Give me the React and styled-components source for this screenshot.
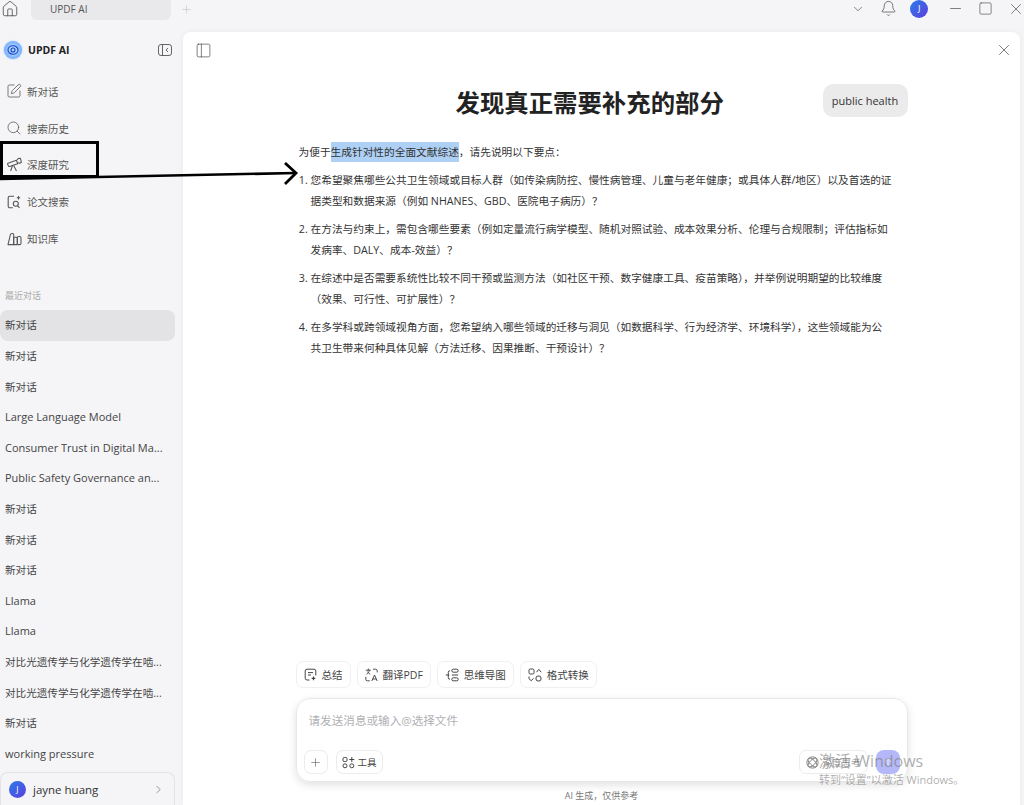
import React from "react"
import styled, { createGlobalStyle } from "styled-components"
import { Home, Plus, ChevronDown, ChevronRight, Bell, Minus, Square, X, SquarePen, Search, PanelLeft, ArrowUp } from "lucide-react"

const FONT = `"Open Sans", "Noto Sans CJK SC", sans-serif`

const GlobalStyle = createGlobalStyle`
  html, body {
    margin: 0;
    padding: 0;
    width: 1024px;
    height: 805px;
    overflow: hidden;
    background: #f5f5f7;
    font-family: ${FONT};
  }
  * { box-sizing: border-box; }
`

function TelescopeIcon() {
  return (
    <svg width="15" height="15" viewBox="0 0 15 15" fill="none" stroke="#555" strokeWidth="1.05" strokeLinejoin="round">
      <path d="M1 6.2L9.4 3.2l1.3 3.6-8.2 2.7a.8.8 0 0 1-1-.5L.6 7.2a.8.8 0 0 1 .4-1z" />
      <path d="M10 3l1.2-1.4 2.2-.3 1 4-1.6 1-2-.6" />
      <path d="M5.5 8.5L3.6 14M6.5 8.2L9.5 14" />
    </svg>
  )
}

function PaperSearchIcon() {
  return (
    <svg width="14" height="14" viewBox="0 0 14 14" fill="none" stroke="#555" strokeWidth="1.1">
      <path d="M7 1.2H2.8A1.6 1.6 0 0 0 1.2 2.8v8.4a1.6 1.6 0 0 0 1.6 1.6h3" />
      <circle cx="8.8" cy="8.8" r="2.5" />
      <path d="M10.6 10.8l1.9 2M11.5 1v3.4M9.8 2.7h3.4" />
    </svg>
  )
}

function KnowledgeIcon() {
  return (
    <svg width="15" height="14" viewBox="0 0 15 14" fill="none" stroke="#555" strokeWidth="1.05" strokeLinejoin="round">
      <path d="M1 12.6L3.4 2.6c.2-.8.8-1.2 1.5-1.2h.8c.6 0 1 .4 1 1v10.2z" />
      <path d="M6.7 12.6V5.2h2.6c.6 0 1 .4 1 1v6.4z" />
      <rect x="10.3" y="4.4" width="3.7" height="8.2" rx="1.4" />
    </svg>
  )
}

const navItems = [
  { label: "新对话", icon: <SquarePen size={16} strokeWidth={1.15} /> },
  { label: "搜索历史", icon: <Search size={16} strokeWidth={1.15} /> },
  { label: "深度研究", icon: <TelescopeIcon /> },
  { label: "论文搜索", icon: <PaperSearchIcon /> },
  { label: "知识库", icon: <KnowledgeIcon /> },
]

const chats = [
  "新对话",
  "新对话",
  "Large Language Model",
  "Consumer Trust in Digital Ma...",
  "Public Safety Governance an...",
  "新对话",
  "新对话",
  "新对话",
  "Llama",
  "Llama",
  "对比光遗传学与化学遗传学在啮...",
  "对比光遗传学与化学遗传学在啮...",
  "新对话",
  "working pressure",
]

const isCjk = (text) => /[\u4e00-\u9fff]/.test(text)

const questions = [
  "您希望聚焦哪些公共卫生领域或目标人群\uFF08如传染病防控、慢性病管理、儿童与老年健康\uFF1B或具体人群/地区\uFF09以及首选的证据类型和数据来源\uFF08例如 NHANES、GBD、医院电子病历\uFF09\uFF1F",
  "在方法与约束上\uFF0C需包含哪些要素\uFF08例如定量流行病学模型、随机对照试验、成本效果分析、伦理与合规限制\uFF1B评估指标如发病率、DALY、成本-效益\uFF09\uFF1F",
  "在综述中是否需要系统性比较不同干预或监测方法\uFF08如社区干预、数字健康工具、疫苗策略\uFF09\uFF0C并举例说明期望的比较维度\uFF08效果、可行性、可扩展性\uFF09\uFF1F",
  "在多学科或跨领域视角方面\uFF0C您希望纳入哪些领域的迁移与洞见\uFF08如数据科学、行为经济学、环境科学\uFF09\uFF0C这些领域能为公共卫生带来何种具体见解\uFF08方法迁移、因果推断、干预设计\uFF09\uFF1F",
]

function SummaryIcon() {
  return (
    <svg width="13" height="13" viewBox="0 0 13 13" fill="none" stroke="#444" strokeWidth="1">
      <path d="M5.5 12H3A1.8 1.8 0 0 1 1.2 10.2V3A1.8 1.8 0 0 1 3 1.2h7A1.8 1.8 0 0 1 11.8 3v4.5" />
      <path d="M4 4.6h5M4 7h3" />
      <path d="M9.5 8.6v3.6M7.7 10.4h3.6" strokeWidth="1.2" />
    </svg>
  )
}

function TranslateIcon() {
  return (
    <svg width="13" height="14" viewBox="0 0 13 14" fill="none" stroke="#444" strokeWidth="0.95">
      <path d="M.8 2.2h5M3.3.6v1.6M1.6 6.2c1.6-.8 2.4-2 2.7-4M5.2 6.2c-1.4-.6-2.2-1.4-2.6-2.6" />
      <path d="M8 1.2h2.6a1.6 1.6 0 0 1 1.6 1.6v1.6" />
      <path d="M4.8 12.8H2.4A1.6 1.6 0 0 1 .8 11.2V8.8" />
      <path d="M6.8 13l2.7-6 2.7 6M7.8 11h3.4" />
    </svg>
  )
}

function MindmapIcon() {
  return (
    <svg width="14" height="14" viewBox="0 0 14 14" fill="none" stroke="#444" strokeWidth="1">
      <rect x="6.8" y="1.2" width="6.4" height="3" rx="1.5" />
      <rect x="6.8" y="9.8" width="6.4" height="3" rx="1.5" />
      <path d="M6.8 7h6.4M.8 7h3.4M5 2.7A1.7 1.7 0 0 0 3.3 4.4v5.2A1.7 1.7 0 0 0 5 11.3" />
    </svg>
  )
}

function ConvertIcon() {
  return (
    <svg width="14" height="14" viewBox="0 0 14 14" fill="none" stroke="#444" strokeWidth="1">
      <rect x="1" y="1" width="5" height="5" rx="1.3" />
      <rect x="8" y="8" width="5" height="5" rx="2" />
      <path d="M8.5 4.2l2.3-2.8 2.4 2.8M1 8.5v2.2l2.2 2 2.4-2.4" />
    </svg>
  )
}

function ToolsIcon() {
  return (
    <svg width="13" height="13" viewBox="0 0 13 13" fill="none" stroke="#444" strokeWidth="1">
      <rect x="1" y="1.5" width="4" height="4" rx="1.2" />
      <circle cx="3" cy="9.8" r="2" />
      <circle cx="9.8" cy="9.8" r="2" />
      <path d="M9.8 1v5M7.3 3.5h5" />
    </svg>
  )
}

function ModelIcon() {
  return (
    <svg width="13" height="13" viewBox="0 0 13 13" fill="none" stroke="#777" strokeWidth="0.9">
      <ellipse cx="6.5" cy="6.5" rx="5.8" ry="2.6" transform="rotate(45 6.5 6.5)" />
      <ellipse cx="6.5" cy="6.5" rx="5.8" ry="2.6" transform="rotate(-45 6.5 6.5)" />
      <circle cx="6.5" cy="6.5" r="5.6" />
    </svg>
  )
}

function Logo() {
  return (
    <LogoMark>
      <svg width="14" height="14" viewBox="0 0 14 14" fill="none" stroke="#1b3fc4" strokeWidth="1.1">
        <ellipse cx="7" cy="7" rx="5" ry="4.2" />
        <circle cx="7" cy="7" r="2" />
      </svg>
    </LogoMark>
  )
}

const App = () => {
  return (
    <Page>
      <GlobalStyle />
      <TitleBar>
        <HomeButton>
          <Home size={18} strokeWidth={1.05} />
        </HomeButton>
        <Tab>UPDF AI</Tab>
        <NewTab>
          <Plus size={13} strokeWidth={1.2} />
        </NewTab>
        <AccountControls>
          <ControlSlot>
            <ChevronDown size={14} strokeWidth={1.1} />
          </ControlSlot>
          <ControlSlot>
            <Bell size={17} strokeWidth={1} />
          </ControlSlot>
          <ControlSlot>
            <Avatar $size={18}>J</Avatar>
          </ControlSlot>
        </AccountControls>
        <WindowControls>
          <ControlSlot>
            <Minus size={17} strokeWidth={0.95} />
          </ControlSlot>
          <ControlSlot>
            <Square size={15} strokeWidth={1} />
          </ControlSlot>
          <ControlSlot>
            <X size={18} strokeWidth={0.9} />
          </ControlSlot>
        </WindowControls>
      </TitleBar>

      <Body>
        <Sidebar>
          <Brand>
            <Logo />
            <BrandName>UPDF AI</BrandName>
            <CollapseButton>
              <svg width="14" height="12" viewBox="0 0 14 12" fill="none" stroke="#555" strokeWidth="0.9">
                <rect x="0.5" y="0.5" width="13" height="11" rx="2.5" />
                <path d="M4.5 0.5v11M10 4L8 6l2 2" />
              </svg>
            </CollapseButton>
          </Brand>

          <Nav>
            {navItems.map((item) => (
              <NavItem key={item.label}>
                <NavIcon>{item.icon}</NavIcon>
                <span>{item.label}</span>
              </NavItem>
            ))}
          </Nav>

          <RecentLabel>最近对话</RecentLabel>

          <ChatList>
            <ChatRow $active $cjk>
              新对话
            </ChatRow>
            {chats.map((title, i) => (
              <ChatRow key={i} $cjk={isCjk(title)}>
                {title}
              </ChatRow>
            ))}
          </ChatList>

          <UserRow>
            <Avatar $size={17}>J</Avatar>
            <UserName>jayne huang</UserName>
            <ChevronRight size={13} strokeWidth={1.1} />
          </UserRow>
        </Sidebar>

        <Panel>
          <PanelHeader>
            <PanelLeft size={17} strokeWidth={0.95} />
            <X size={18} strokeWidth={0.95} />
          </PanelHeader>

          <Column>
            <TitleRow>
              <Title>发现真正需要补充的部分</Title>
              <Tag>public health</Tag>
            </TitleRow>

            <Answer>
              <Intro>
                为便于<Selected>生成针对性的全面文献综述</Selected>
                {"\uFF0C请先说明以下要点\uFF1A"}
              </Intro>
              <Questions>
                {questions.map((q) => (
                  <li key={q}>{q}</li>
                ))}
              </Questions>
            </Answer>

            <QuickActions>
              <QuickButton>
                <SummaryIcon />
                总结
              </QuickButton>
              <QuickButton>
                <TranslateIcon />
                翻译PDF
              </QuickButton>
              <QuickButton>
                <MindmapIcon />
                思维导图
              </QuickButton>
              <QuickButton>
                <ConvertIcon />
                格式转换
              </QuickButton>
            </QuickActions>

            <Composer>
              <Placeholder>请发送消息或输入@选择文件</Placeholder>
              <ComposerBar>
                <PlusButton>
                  <Plus size={13} strokeWidth={1.1} />
                </PlusButton>
                <ToolButton>
                  <ToolsIcon />
                  工具
                </ToolButton>
                <ModelButton>
                  <ModelIcon />
                  深度思考
                </ModelButton>
                <SendButton>
                  <ArrowUp size={12} strokeWidth={1.6} />
                </SendButton>
              </ComposerBar>
            </Composer>

            <Disclaimer>{"AI 生成\uFF0C仅供参考"}</Disclaimer>
          </Column>
        </Panel>
      </Body>

      <Callout />
      <Arrow width="300" height="30" viewBox="0 0 300 30" fill="none" stroke="#000">
        <path d="M0 17L296 11" strokeWidth="2.6" />
        <path d="M285 1L296 11L285 22" strokeWidth="2.8" />
      </Arrow>

      <Watermark>
        <strong>激活 Windows</strong>
        <span>转到“设置”以激活 Windows。</span>
      </Watermark>
    </Page>
  )
}
export default App

const Page = styled.div`
  position: relative;
  width: 1024px;
  height: 805px;
  overflow: hidden;
  display: flex;
  flex-direction: column;
  background: #f5f5f7;
  color: #333;
`

const TitleBar = styled.header`
  height: 32px;
  flex: none;
  display: flex;
  align-items: flex-start;
  color: #444;
`

const HomeButton = styled.div`
  width: 31px;
  height: 18px;
  padding-left: 1px;
  display: flex;
  align-items: center;
`

const Tab = styled.div`
  width: 140px;
  height: 20px;
  padding-left: 19px;
  background: #e9e9eb;
  border-radius: 0 0 6px 6px;
  font-size: 10px;
  line-height: 18px;
  color: #555;
`

const NewTab = styled.div`
  height: 18px;
  margin-left: 9px;
  display: flex;
  align-items: center;
  color: #c4c4c8;
`

const AccountControls = styled.div`
  margin-left: auto;
  display: flex;
`

const WindowControls = styled.div`
  margin: 0 -7.5px 0 5.5px;
  display: flex;
`

const ControlSlot = styled.div`
  width: 30.5px;
  height: 17px;
  display: flex;
  align-items: center;
  justify-content: center;
  color: #444;
`

const Avatar = styled.div`
  width: ${(p) => p.$size}px;
  height: ${(p) => p.$size}px;
  flex: none;
  border-radius: 50%;
  background: linear-gradient(135deg, #2b7be8, #5b3fe0);
  color: #fff;
  font-size: ${(p) => p.$size / 2}px;
  display: flex;
  align-items: center;
  justify-content: center;
`

const Body = styled.div`
  flex: 1;
  min-height: 0;
  display: flex;
`

const Sidebar = styled.aside`
  width: 183px;
  flex: none;
  display: flex;
  flex-direction: column;
`

const Brand = styled.div`
  height: 36px;
  padding: 0 11px 0 4px;
  display: flex;
  align-items: center;
  gap: 6px;
`

const LogoMark = styled.div`
  width: 18px;
  height: 18px;
  border-radius: 50%;
  background: radial-gradient(circle, #a8d4ff 30%, #4f8df5);
  box-shadow: 0 0 2px #8db8fa;
  display: flex;
  align-items: center;
  justify-content: center;
`

const BrandName = styled.div`
  font-size: 10.5px;
  font-weight: 700;
  color: #222;
`

const CollapseButton = styled.div`
  margin-left: auto;
  display: flex;
`

const Nav = styled.nav`
  margin-top: 5px;
  display: flex;
  flex-direction: column;
`

const NavItem = styled.div`
  height: 36.8px;
  padding-left: 6px;
  display: flex;
  align-items: center;
  gap: 5px;
  font-size: 10.5px;
  color: #555;
`

const NavIcon = styled.div`
  width: 16px;
  display: flex;
  align-items: center;
  justify-content: center;
  color: #555;
`

const RecentLabel = styled.div`
  margin-top: 33px;
  padding-left: 5px;
  font-size: 9px;
  line-height: 12px;
  color: #aaa;
`

const ChatList = styled.div`
  margin-top: 8.4px;
  width: 175px;
  display: flex;
  flex-direction: column;
  flex: 1;
  min-height: 0;
  overflow: hidden;
`

const ChatRow = styled.div`
  height: 30.6px;
  flex: none;
  padding: 0 5px;
  line-height: 30.6px;
  font-size: ${(p) => (p.$cjk ? "10.6px" : "11px")};
  color: #444;
  white-space: nowrap;
  border-radius: 8px;
  background: ${(p) => (p.$active ? "#e3e3e6" : "transparent")};
`

const UserRow = styled.div`
  width: 175px;
  height: 33px;
  flex: none;
  padding: 0 9px 0 8px;
  border: 1px solid #e3e3e6;
  border-bottom: 0;
  border-radius: 8px 8px 0 0;
  display: flex;
  align-items: center;
  gap: 7px;
  color: #555;
`

const UserName = styled.div`
  flex: 1;
  font-size: 11.5px;
  color: #333;
`

const Panel = styled.main`
  width: 837px;
  flex: none;
  display: flex;
  flex-direction: column;
  background: #fff;
  border-radius: 8px 8px 0 0;
  box-shadow: 0 0 6px rgba(0, 0, 0, 0.05);
`

const PanelHeader = styled.div`
  height: 36px;
  flex: none;
  padding: 0 7px 0 12px;
  display: flex;
  align-items: center;
  justify-content: space-between;
  color: #444;
`

const Column = styled.div`
  flex: 1;
  min-height: 0;
  width: 612px;
  margin: 0 auto;
  padding-bottom: 3px;
  display: flex;
  flex-direction: column;
`

const TitleRow = styled.div`
  margin-top: 16px;
  height: 33px;
  flex: none;
  padding-left: 160px;
  display: flex;
  align-items: center;
  justify-content: space-between;
`

const Title = styled.h1`
  margin: 0;
  font-size: 24.4px;
  line-height: 33px;
  padding-top: 3px;
  font-weight: 700;
  color: #222;
`

const Tag = styled.div`
  width: 85px;
  height: 33px;
  border-radius: 10px;
  background: #ebebec;
  font-size: 11px;
  color: #333;
  display: flex;
  align-items: center;
  justify-content: center;
`

const Answer = styled.div`
  flex: 1;
  min-height: 0;
  padding: 25px 15px 0 3px;
  font-size: 10.7px;
  color: #333;
`

const Intro = styled.p`
  margin: 0;
  line-height: 21px;
`

const Selected = styled.span`
  background: #aed0f5;
  padding: 3px 0;
`

const Questions = styled.ol`
  margin: 7px 0 0;
  padding: 0 0 0 12px;
  li {
    line-height: 21px;
    margin-bottom: 7px;
  }
`

const QuickActions = styled.div`
  flex: none;
  display: flex;
  gap: 6px;
`

const QuickButton = styled.div`
  height: 27px;
  padding: 0 7px;
  border: 1px solid #f0f0f2;
  border-radius: 7px;
  display: flex;
  align-items: center;
  gap: 5px;
  font-size: 10.5px;
  color: #444;
`

const Composer = styled.div`
  margin-top: 10px;
  height: 84px;
  flex: none;
  padding: 13px 7px 7px;
  border: 1px solid #e8e8ea;
  border-radius: 14px;
  box-shadow: 0 3px 8px rgba(0, 0, 0, 0.12);
  display: flex;
  flex-direction: column;
  justify-content: space-between;
`

const Placeholder = styled.div`
  padding-left: 5px;
  font-size: 11.6px;
  color: #b0b0b4;
`

const ComposerBar = styled.div`
  display: flex;
  align-items: center;
  gap: 8px;
`

const PlusButton = styled.div`
  width: 24px;
  height: 24px;
  border: 1px solid #ececee;
  border-radius: 7px;
  display: flex;
  align-items: center;
  justify-content: center;
  color: #555;
`

const ToolButton = styled.div`
  height: 24px;
  padding: 0 5px;
  border: 1px solid #ececee;
  border-radius: 7px;
  display: flex;
  align-items: center;
  gap: 3px;
  font-size: 9.5px;
  color: #444;
`

const ModelButton = styled(ToolButton)`
  margin-left: auto;
  padding: 0 6px;
  color: #999;
`

const SendButton = styled.div`
  width: 24px;
  height: 24px;
  border-radius: 8px;
  background: #b4b8f8;
  color: #fff;
  display: flex;
  align-items: center;
  justify-content: center;
`

const Disclaimer = styled.div`
  margin-top: 7px;
  text-align: center;
  font-size: 9px;
  color: #777;
`

/* screenshot annotation and the OS watermark sit over the page */
const Callout = styled.div`
  position: absolute;
  left: 0;
  top: 141px;
  width: 99px;
  height: 37px;
  border: 3px solid #000;
`

const Arrow = styled.svg`
  position: absolute;
  left: 0;
  top: 162px;
`

const Watermark = styled.div`
  position: absolute;
  left: 819px;
  top: 750px;
  display: flex;
  flex-direction: column;
  color: rgba(120, 120, 120, 0.6);
  pointer-events: none;
  strong {
    font-weight: 400;
    font-size: 16px;
    line-height: 22px;
  }
  span {
    font-size: 11px;
    line-height: 15px;
  }
`
